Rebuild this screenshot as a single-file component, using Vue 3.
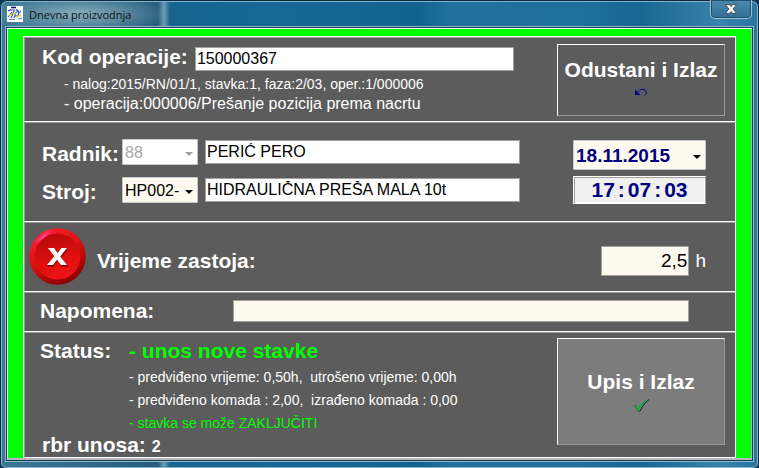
<script setup>
import { ref } from "vue";

const operationCode = ref("150000367");
const worker = ref("88");
const workerName = ref("PERIĆ PERO");
const machine = ref("HP002-");
const machineName = ref("HIDRAULIČNA PREŠA MALA 10t");
const date = ref("18.11.2015");
const time = ref(["17", "07", "03"]);
const downtime = ref("2,5");
const note = ref("");
</script>

<template>
  <div class="window">
    <header class="titlebar">
      <svg class="app-icon" viewBox="0 0 16 16">
        <rect width="16" height="16" fill="#fff" />
        <g fill="none" stroke-width="1.2">
          <path d="M4 1.5h5" stroke="#101090" stroke-width="1.6" />
          <path d="M1 5l3-1.500M3 4h5M9 3.500l3 2" stroke="#2433a8" />
          <path d="M1 11l4-5M4 12l3-7M7 12l2-6h3l-1 4h-3" stroke="#3b56c4" />
          <path d="M2 9h3M6 8l3-1M10 11l4-2" stroke="#e0e020" stroke-width="1.6" />
          <path d="M12 7l2-2M11 13l4-1M2 13.500h6" stroke="#5b7fd6" />
        </g>
      </svg>
      <span class="title">Dnevna proizvodnja</span>
      <button class="close" aria-label="Zatvori">
        <svg viewBox="0 0 12 10">
          <path
            d="M0.500 0.500h3.800L6 2.600 7.700 0.500h3.800L8.200 5l3.300 4.500H7.700L6 7.400 4.300 9.500H0.500L3.800 5z"
            fill="#fff"
            stroke="#46525e"
          />
        </svg>
      </button>
    </header>

    <main class="client">
      <form class="panel" @submit.prevent>
        <!-- Operation -->
        <section class="operation">
          <div class="operation-info">
            <div class="code-row">
              <label for="code">Kod operacije:</label>
              <input id="code" class="field" type="text" v-model="operationCode" />
            </div>
            <p class="order">- nalog:2015/RN/01/1, stavka:1, faza:2/03, oper.:1/000006</p>
            <p class="task">- operacija:000006/Prešanje pozicija prema nacrtu</p>
          </div>
          <button type="button" class="action">
            Odustani i Izlaz
            <svg viewBox="0 0 16 16">
              <path d="M2 5.500V11h5.500z" fill="#000090" />
              <path
                d="M4.500 8.500C7 5 11 4.500 12.800 7c1 1.800 0.200 3.500-1.300 4.500"
                fill="none"
                stroke="#000090"
              />
            </svg>
          </button>
        </section>

        <!-- Worker and machine -->
        <section class="people">
          <div class="people-grid">
            <label for="worker">Radnik:</label>
            <div class="combo disabled">
              <select id="worker" v-model="worker" disabled>
                <option>88</option>
              </select>
            </div>
            <input class="field" type="text" aria-label="Ime radnika" v-model="workerName" />

            <label for="machine">Stroj:</label>
            <div class="combo">
              <select id="machine" v-model="machine">
                <option>HP002-</option>
              </select>
            </div>
            <input class="field" type="text" aria-label="Naziv stroja" v-model="machineName" />
          </div>
          <div class="when">
            <div class="combo date">
              <select aria-label="Datum" v-model="date">
                <option>18.11.2015</option>
              </select>
            </div>
            <time class="clock">
              {{ time[0] }}<span>:</span>{{ time[1] }}<span>:</span>{{ time[2] }}
            </time>
          </div>
        </section>

        <!-- Downtime -->
        <section class="downtime">
          <button type="button" class="stop" aria-label="Poništi zastoj">
            <svg viewBox="0 0 57 57">
              <defs>
                <linearGradient id="rim" x1="0.2" y1="0" x2="0.7" y2="1">
                  <stop offset="0" stop-color="#ff2038" />
                  <stop offset="0.45" stop-color="#e01010" />
                  <stop offset="1" stop-color="#860000" />
                </linearGradient>
                <linearGradient id="face" x1="0.3" y1="0" x2="0.6" y2="1">
                  <stop offset="0" stop-color="#b80808" />
                  <stop offset="0.6" stop-color="#e01010" />
                  <stop offset="1" stop-color="#ee1515" />
                </linearGradient>
                <radialGradient id="shine">
                  <stop offset="0" stop-color="#ff50a0" />
                  <stop offset="1" stop-color="#ff3060" stop-opacity="0" />
                </radialGradient>
              </defs>
              <circle cx="28.5" cy="28.5" r="28.3" fill="url(#rim)" />
              <ellipse
                cx="14"
                cy="9"
                rx="12"
                ry="4"
                fill="url(#shine)"
                transform="rotate(-38 14 9)"
              />
              <circle cx="28.5" cy="28.5" r="23" fill="url(#face)" />
              <path
                d="M20 21h6l3 4.800 4-4.800h6l-7 8.500 7 9h-6.500l-4-5.500-4.500 5.500h-6l7.500-9z"
                fill="#800000"
              />
              <path
                d="M19 20h6l3.500 5 4-5H38l-6.800 8.500L38 37h-6l-4-5.300L24 37h-6l7.300-8.700z"
                fill="#fff"
              />
            </svg>
          </button>
          <div class="downtime-row">
            <label for="downtime">Vrijeme zastoja:</label>
            <input id="downtime" class="field hours" type="text" v-model="downtime" />
            <span class="unit">h</span>
          </div>
        </section>

        <!-- Note -->
        <section class="note">
          <label for="note">Napomena:</label>
          <input id="note" class="field" type="text" v-model="note" />
        </section>

        <!-- Status -->
        <section class="status">
          <div class="status-info">
            <div class="status-row">
              <span class="caption">Status:</span>
              <div>
                <strong>- unos nove stavke</strong>
                <p>- predviđeno vrijeme: 0,50h,&nbsp; utrošeno vrijeme: 0,00h</p>
                <p>- predviđeno komada : 2,00,&nbsp; izrađeno komada : 0,00</p>
                <p class="ok">- stavka se može ZAKLJUČITI</p>
              </div>
            </div>
            <div class="entry">rbr unosa: <span>2</span></div>
          </div>
          <button type="submit" class="action save">
            Upis i Izlaz
            <svg viewBox="0 0 16 16">
              <path d="M2 9l3 5.800L7 15l4-7 5-4.500" fill="none" stroke="#101810" />
              <path d="M2 9.500l2-.5 1.500 2.500 4-5.500 5-3-5 6-3.500 6H5z" fill="#18b048" />
            </svg>
          </button>
        </section>
      </form>
    </main>
  </div>
</template>

<style>
body {
  margin: 0;
  background: #06304c;
}
</style>

<style scoped>
* {
  box-sizing: border-box;
}

.window {
  min-height: 100vh;
  display: flex;
  flex-direction: column;
  padding: 0 7px 9px;
  font-family: "Liberation Sans", Arial, sans-serif;
  color: #fff;
  border-radius: 7px 7px 6px 6px;
  background:
    radial-gradient(ellipse 90px 20px at 80px 14px, #88aebc, transparent),
    linear-gradient(90deg, #3c7896 0, #255c7c 158px, #6c9cb4 164px, #18648f 170px, #156896 280px, #126490 420px, #23719c 450px, #20709c 580px, #186692 640px, #3a83aa 720px, #2874a0 100%);
  box-shadow:
    inset 0 0 0 1px #08283e,
    inset 0 0 0 2px #88b4ca;
}

.titlebar {
  height: 28px;
  display: flex;
  align-items: center;
}
.app-icon {
  width: 16px;
  height: 16px;
}
.title {
  flex: 1;
  margin-left: 6px;
  font: 11px "Open Sans", "Noto Sans", sans-serif;
  color: #101010;
}
.close {
  align-self: flex-start;
  display: flex;
  align-items: center;
  justify-content: center;
  width: 42px;
  height: 19px;
  padding: 0;
  border: 1px solid #9cc0d4;
  border-top: none;
  border-radius: 0 0 5px 5px;
  background: linear-gradient(#4c88aa, #2f7097);
  box-shadow: inset 0 0 0 1px #1d506e;
}
.close svg {
  width: 12px;
  height: 10px;
}

.client {
  flex: 1;
  display: flex;
  padding: 7px 15px 0;
  background: #00ff00;
  border: 1px solid #fff;
  border-right-color: #b0b0b0;
  border-bottom: 2px solid #b8b8b8;
  box-shadow:
    0 0 0 1px #163c54,
    0 0 0 2px #90b8cc;
}

.panel {
  flex: 1;
  display: flex;
  flex-direction: column;
  border: 1px solid #fff;
  background: #5c5c5c;
}
.panel section {
  display: flex;
  box-shadow: inset 1px 1px #999;
}
.panel section + section {
  border-top: 1px solid #fff;
}

label,
.caption {
  font-size: 21px;
  font-weight: bold;
  white-space: nowrap;
}
p {
  margin: 0;
  white-space: nowrap;
}

.field {
  min-width: 0;
  height: 24px;
  padding: 0 1px;
  border: 1px solid #a0a0a0;
  border-radius: 0;
  background: #fff;
  font: 16px "Liberation Sans", Arial, sans-serif;
  color: #000;
}

.action {
  align-self: flex-start;
  display: flex;
  flex-direction: column;
  align-items: center;
  justify-content: center;
  gap: 2px;
  width: 168px;
  height: 72px;
  padding: 0 0 2px;
  border: 1px solid #fff;
  border-right-color: #999;
  border-bottom-color: #999;
  background: #5c5c5c;
  font: bold 21px/24px "Liberation Sans", Arial, sans-serif;
  color: #fff;
}
.action svg {
  width: 16px;
  height: 16px;
}
.action.save {
  height: 107px;
  background: #7c7c7c;
}

.operation {
  gap: 43px;
  padding: 7px 10px 5px 18px;
}
.operation-info {
  flex: 1;
  padding-top: 3px;
}
.code-row {
  display: flex;
  align-items: center;
  gap: 7px;
  height: 24px;
  margin-bottom: 3px;
}
.code-row label {
  line-height: 20px;
  padding-bottom: 4px;
}
.code-row .field {
  flex: 1;
}
.order,
.task {
  padding-left: 22px;
  line-height: 20px;
}
.order {
  font-size: 14px;
}
.task {
  font-size: 16px;
}

.people {
  gap: 53px;
  padding: 17px 29px 17px 18px;
}
.people-grid {
  flex: 1;
  display: grid;
  grid-template-columns: 80px 76px 1fr;
  grid-auto-rows: 26px;
  row-gap: 12px;
  align-items: center;
}
.people-grid label {
  padding-top: 4px;
}
.people-grid .field {
  margin-left: 7px;
}

.combo {
  position: relative;
  height: 26px;
}
.combo::after {
  content: "";
  position: absolute;
  right: 5px;
  top: 50%;
  border: 4px solid transparent;
  border-top-color: #000;
  border-bottom: none;
  pointer-events: none;
}
.combo select {
  appearance: none;
  width: 100%;
  height: 100%;
  padding: 0 2px;
  border: 1px solid #c4c8d0;
  border-radius: 1px;
  background: #fffaf0;
  font: 16px "Liberation Sans", Arial, sans-serif;
  color: #000;
}
.combo.disabled::after {
  border-top-color: #a0a0a0;
}
.combo.disabled select {
  background: #fff;
  color: #a8a8a8;
  opacity: 1;
}

.when {
  display: flex;
  flex-direction: column;
  gap: 6px;
  width: 133px;
  padding-top: 1px;
}
.combo.date {
  height: 30px;
}
.combo.date select {
  font-size: 19px;
  font-weight: bold;
  color: #000080;
}
.clock {
  height: 28px;
  border: 1px solid #fff;
  border-right-color: #a0a0a0;
  box-shadow: inset 1px 1px #a0a0a0, inset -1px -1px #fff;
  background: #f0f0f0;
  font-size: 21px;
  font-weight: bold;
  line-height: 26px;
  text-align: center;
  color: #000080;
}
.clock span {
  padding: 0 3px;
}

.downtime {
  gap: 11px;
  padding: 6px 29px 6px 5px;
}
.stop {
  width: 57px;
  height: 57px;
  padding: 0;
  border: none;
  border-radius: 50%;
  background: none;
}
.stop svg {
  display: block;
}
.downtime-row {
  flex: 1;
  display: flex;
  align-items: center;
  padding-top: 9px;
}
.hours {
  width: 88px;
  height: 30px;
  margin-left: auto;
  background: #fffaf0;
  font-size: 19px;
  text-align: right;
}
.unit {
  margin-left: 6px;
  font-size: 19px;
}

.note {
  align-items: center;
  padding: 8px 46px 9px 16px;
}
.note label {
  width: 193px;
  line-height: 20px;
}
.note .field {
  flex: 1;
  height: 22px;
  background: #fffaf0;
}

.status {
  flex: 1;
  padding: 6px 10px 0 16px;
}
.status-info {
  flex: 1;
}
.status-row {
  display: grid;
  grid-template-columns: 89px 1fr;
}
.caption,
.status-row strong {
  font-size: 21px;
  line-height: 26px;
}
.status-row strong {
  display: block;
  margin-bottom: 2px;
  color: #00ff00;
}
.status-row p {
  font-size: 14px;
  line-height: 23px;
}
.status-row .ok {
  color: #00ff00;
}
.entry {
  padding-left: 2px;
  font-size: 21px;
  font-weight: bold;
  line-height: 20px;
}
.entry span {
  font-size: 16px;
}
</style>
